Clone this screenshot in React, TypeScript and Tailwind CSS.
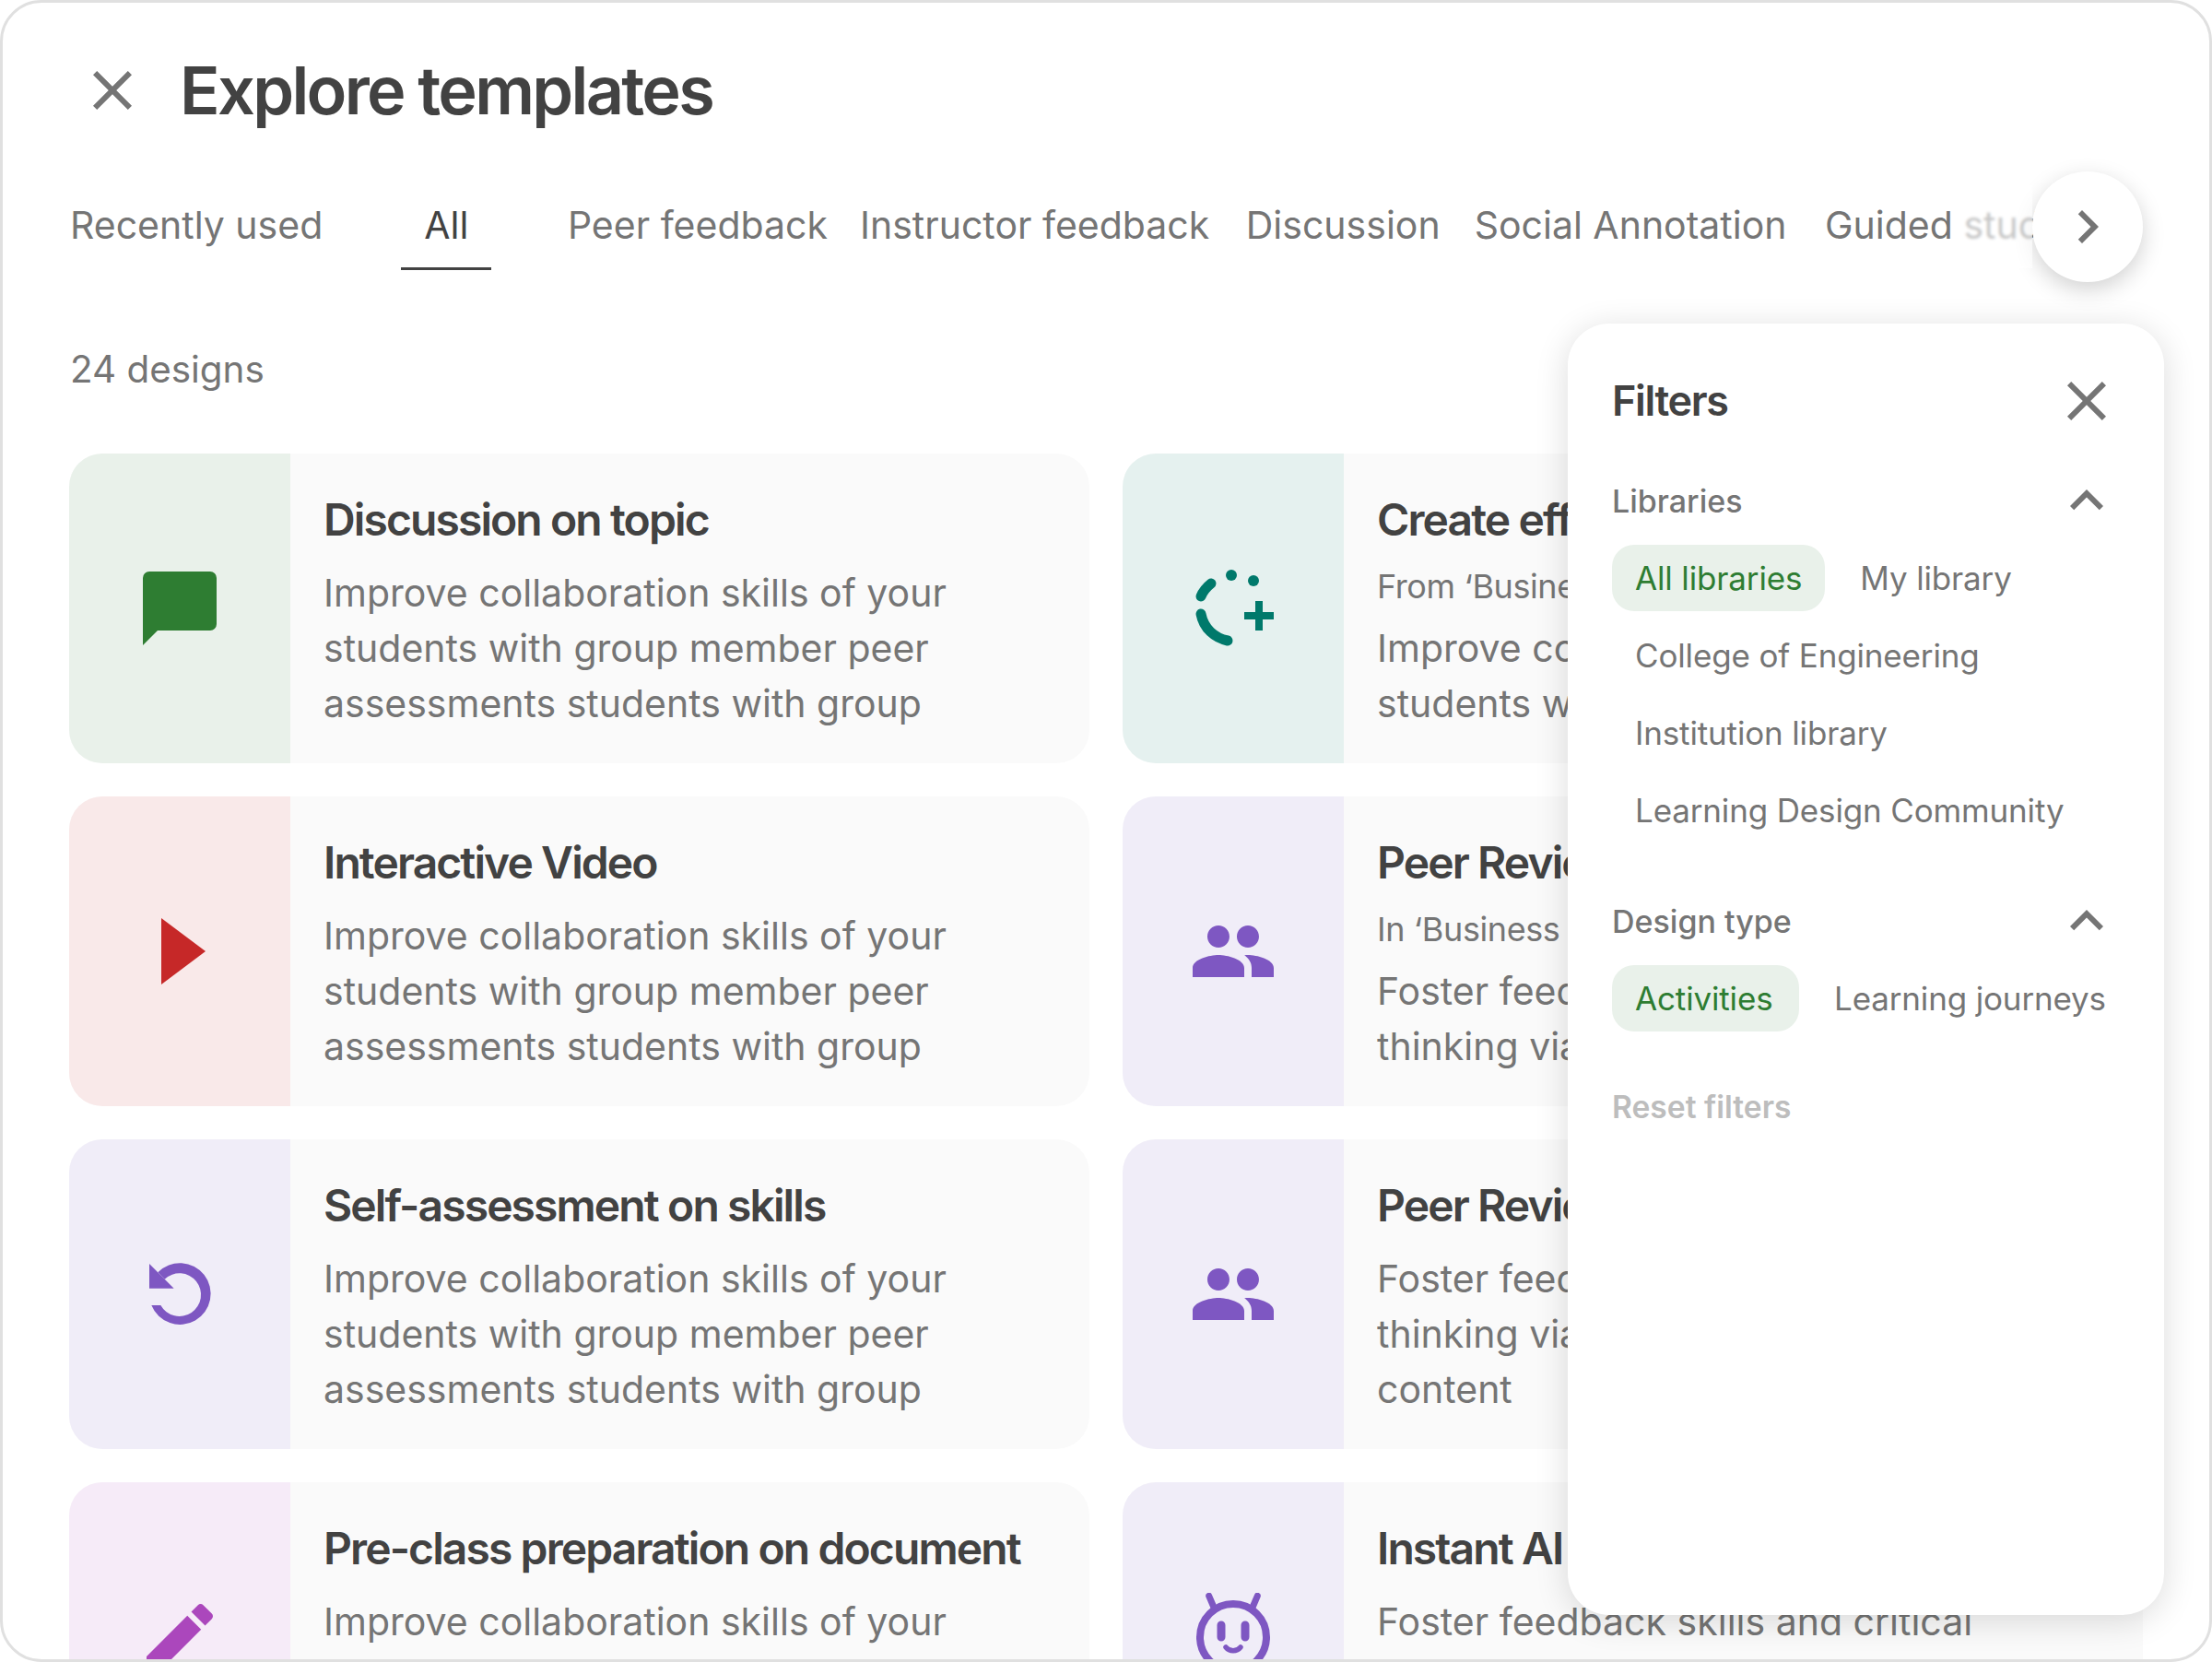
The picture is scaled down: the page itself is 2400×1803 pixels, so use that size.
import type { ReactNode } from 'react';

const font = "font-['Inter','Liberation_Sans',sans-serif]";

function CloseIcon({ className = '' }: { className?: string }) {
  return (
    <svg width="72" height="72" viewBox="0 0 24 24" fill="#757575" className={`shrink-0 ${className}`}>
      <path d="M19 6.41L17.59 5 12 10.59 6.41 5 5 6.41 10.59 12 5 17.59 6.41 19 12 13.41 17.59 19 19 17.59 13.41 12z" />
    </svg>
  );
}

function NextIcon() {
  return (
    <svg width="72" height="72" viewBox="0 0 24 24" fill="#757575">
      <path d="M10 6L8.59 7.41 13.17 12l-4.58 4.59L10 18l6-6z" />
    </svg>
  );
}

function ExpandLessIcon() {
  return (
    <svg width="72" height="72" viewBox="0 0 24 24" fill="#757575">
      <path d="M12 8l-6 6 1.41 1.41L12 10.83l4.59 4.58L18 14z" />
    </svg>
  );
}

function ChatIcon() {
  return (
    <svg width="80" height="80" viewBox="0 0 80 80" fill="#2e7d32">
      <path d="M7 0H73a7 7 0 0 1 7 7V57a7 7 0 0 1-7 7H16L0 80V7a7 7 0 0 1 7-7z" />
    </svg>
  );
}

function PlayIcon() {
  return (
    <svg width="48" height="72" viewBox="0 0 48 72" fill="#c62828" className="ml-[8px]">
      <path d="M0 0L48 36L0 72z" />
    </svg>
  );
}

function AddCircleIcon() {
  return (
    <svg width="96" height="96" viewBox="0 0 96 96" fill="none" stroke="#00796b" strokeLinecap="round">
      <path d="M13 35C15 30 19 25 24 21" strokeWidth="11" />
      <path d="M13 54C16 70 28 80 42 83" strokeWidth="11" />
      <circle cx="46" cy="12" r="6" fill="#00796b" stroke="none" />
      <circle cx="70" cy="18" r="6" fill="#00796b" stroke="none" />
      <path d="M60 56H92M76 40V72" strokeWidth="8" strokeLinecap="butt" />
    </svg>
  );
}

function PeopleIcon() {
  return (
    <svg width="96" height="96" viewBox="0 0 24 24" fill="#7e57c2">
      <path d="M16 11c1.66 0 2.99-1.34 2.99-3S17.66 5 16 5c-1.66 0-3 1.34-3 3s1.34 3 3 3zm-8 0c1.66 0 2.99-1.34 2.99-3S9.66 5 8 5C6.34 5 5 6.34 5 8s1.34 3 3 3zm0 2c-2.33 0-7 1.17-7 3.5V19h14v-2.5c0-2.33-4.67-3.5-7-3.5zm8 0c-.29 0-.62.02-.97.05 1.16.84 1.97 1.97 1.97 3.45V19h6v-2.5c0-2.33-4.67-3.5-7-3.5z" />
    </svg>
  );
}

function ReplayIcon() {
  return (
    <svg width="120" height="120" viewBox="0 -18 360 360" fill="#7e57c2">
      <path d="M81 63V143H161z" />
      <path d="M88 198A100 100 0 1 0 109 91L131 113A70 70 0 1 1 118 198z" />
    </svg>
  );
}

function EditIcon() {
  return (
    <svg width="96" height="96" viewBox="0 0 24 24" fill="#ab47bc">
      <path d="M3 17.25V21h3.75L17.81 9.94l-3.75-3.75L3 17.25zM20.71 7.04c.39-.39.39-1.02 0-1.41l-2.34-2.34c-.39-.39-1.02-.39-1.41 0l-1.83 1.83 3.75 3.75 1.83-1.83z" />
    </svg>
  );
}

function RobotIcon() {
  return (
    <svg width="96" height="96" viewBox="0 0 96 96" fill="none" stroke="#7e57c2" strokeLinecap="round">
      <circle cx="48" cy="48" r="36" strokeWidth="8" />
      <path d="M21.7 3.3L26.7 15M74.3 3.3L69.3 15" strokeWidth="7" />
      <path d="M35 35V48M61 35V48" strokeWidth="9" />
      <path d="M40 59C44 64 52 64 56 59" strokeWidth="5.5" />
    </svg>
  );
}

interface Template {
  title: string;
  sub?: string;
  lines: string[];
  tint: string;
  icon: ReactNode;
}

const longBody = [
  'Improve collaboration skills of your',
  'students with group member peer',
  'assessments students with group',
];

const leftCards: Template[] = [
  { title: 'Discussion on topic', lines: longBody, tint: 'bg-[#e9f1ea]', icon: <ChatIcon /> },
  { title: 'Interactive Video', lines: longBody, tint: 'bg-[#f9e9e9]', icon: <PlayIcon /> },
  { title: 'Self-assessment on skills', lines: longBody, tint: 'bg-[#f0edf8]', icon: <ReplayIcon /> },
  { title: 'Pre-class preparation on document', lines: longBody, tint: 'bg-[#f6ebf8]', icon: <EditIcon /> },
];

const rightCards: Template[] = [
  {
    title: 'Create effective groups',
    sub: 'From ‘Business 101’',
    lines: ['Improve collaboration skills of your', 'students with group member peer'],
    tint: 'bg-[#e5f1ef]',
    icon: <AddCircleIcon />,
  },
  {
    title: 'Peer Review on document',
    sub: 'In ‘Business 101’',
    lines: ['Foster feedback skills and critical', 'thinking via peer assessments'],
    tint: 'bg-[#f0edf8]',
    icon: <PeopleIcon />,
  },
  {
    title: 'Peer Review on video',
    lines: ['Foster feedback skills and critical', 'thinking via peer assessments of', 'content'],
    tint: 'bg-[#f0edf8]',
    icon: <PeopleIcon />,
  },
  {
    title: 'Instant AI feedback',
    lines: ['Foster feedback skills and critical', 'thinking via instant AI feedback'],
    tint: 'bg-[#f0edf8]',
    icon: <RobotIcon />,
  },
];

const tabs = [
  { label: 'Recently used', cls: 'mr-[85px]' },
  { label: 'All', cls: 'px-[25px] mr-[82.5px]' },
  { label: 'Peer feedback', cls: 'mr-[35px]' },
  { label: 'Instructor feedback', cls: 'mr-[39.5px]' },
  { label: 'Discussion', cls: 'mr-[37px]' },
  { label: 'Social Annotation', cls: 'mr-[41.5px]' },
  { label: 'Guided study', cls: '' },
];

function TemplateCard({ item }: { item: Template }) {
  return (
    <div className="flex h-[336px] shrink-0 overflow-hidden rounded-[36px] bg-[#fafafa]">
      <div className={`flex w-[240px] shrink-0 items-center justify-center ${item.tint}`}>{item.icon}</div>
      <div className="min-w-0 flex-1 pl-[36px] pt-[41px]">
        <h3 className="whitespace-nowrap text-[48px] leading-[62px] font-semibold tracking-[-1.9px] text-[#424242]">
          {item.title}
        </h3>
        {item.sub ? (
          <p className="mt-[18px] mb-[14px] whitespace-nowrap text-[36px] leading-[46px] tracking-[-0.4px] text-[#757575]">
            {item.sub}
          </p>
        ) : (
          <div className="h-[18px]" />
        )}
        {item.lines.map((line) => (
          <p key={line} className="whitespace-nowrap text-[41px] leading-[60px] text-[#757575]">
            {line}
          </p>
        ))}
      </div>
    </div>
  );
}

function Chip({ label, active, cls = '' }: { label: string; active?: boolean; cls?: string }) {
  return (
    <span
      className={`flex h-[72px] shrink-0 items-center rounded-[24px] px-[25px] text-[35px] tracking-[-0.15px] whitespace-nowrap ${
        active ? 'bg-[#e9f1ea] text-[#2e7d32]' : 'text-[#757575]'
      } ${cls}`}
    >
      {label}
    </span>
  );
}

function FilterHead({ label }: { label: string }) {
  return (
    <div className="flex h-[48px] items-center justify-between">
      <span className="text-[34px] font-medium text-[#757575]">{label}</span>
      <ExpandLessIcon />
    </div>
  );
}

export default function App() {
  return (
    <div className={`${font} relative h-[1803px] w-[2400px] overflow-hidden rounded-[45px] border-[3px] border-[#e0e0e0] bg-white`}>
      {/* Header */}
      <div className="flex h-[190px] items-center pl-[83px]">
        <CloseIcon />
        <h1 className="ml-[37px] text-[72px] font-semibold tracking-[-2.7px] text-[#424242]">Explore templates</h1>
      </div>

      {/* Tabs */}
      <div className="mt-[8px] flex h-[92px] items-start pl-[73px] text-[41px] leading-[87px] whitespace-nowrap text-[#757575]">
        {tabs.map((t) => (
          <span
            key={t.label}
            className={`h-[92px] shrink-0 ${t.cls} ${t.label === 'All' ? 'border-b-[3px] border-[#424242] text-[#424242]' : ''}`}
          >
            {t.label}
          </span>
        ))}
      </div>

      <p className="mt-[83px] pl-[73px] text-[40.4px] leading-[50px] text-[#757575]">24 designs</p>

      {/* Grid */}
      <div className="mt-[66px] grid grid-cols-2 gap-x-[36px] px-[72px]">
        <div className="flex flex-col gap-[36px]">
          {leftCards.map((c) => (
            <TemplateCard key={c.title} item={c} />
          ))}
        </div>
        <div className="flex flex-col gap-[36px]">
          {rightCards.map((c) => (
            <TemplateCard key={c.title} item={c} />
          ))}
        </div>
      </div>

      {/* Scroll button with fade */}
      <div className="absolute top-[183px] right-[72px] flex h-[120px] items-center">
        <div className="h-[90px] w-[86px] bg-white/60 backdrop-blur-[1.5px]" />
        <button className="flex h-[120px] w-[120px] items-center justify-center rounded-full bg-white shadow-[0_8px_24px_rgba(0,0,0,0.18)]">
          <NextIcon />
        </button>
      </div>

      {/* Filters panel */}
      <div className="absolute top-[348px] left-[1698px] h-[1401px] w-[647px] rounded-[45px] bg-white px-[48px] pt-[48px] shadow-[0_6px_36px_rgba(0,0,0,0.14)]">
        <div className="flex h-[72px] items-center justify-between">
          <span className="text-[45px] font-semibold tracking-[-1.4px] text-[#424242]">Filters</span>
          <CloseIcon />
        </div>

        <div className="mt-[48px]">
          <FilterHead label="Libraries" />
        </div>
        <div className="mt-[24px] flex flex-col gap-[12px]">
          <div className="flex gap-[13px]">
            <Chip label="All libraries" active />
            <Chip label="My library" />
          </div>
          <Chip label="College of Engineering" cls="self-start" />
          <Chip label="Institution library" cls="self-start" />
          <Chip label="Learning Design Community" cls="self-start" />
        </div>

        <div className="mt-[60px]">
          <FilterHead label="Design type" />
        </div>
        <div className="mt-[24px] flex gap-[13px]">
          <Chip label="Activities" active cls="w-[203px]" />
          <Chip label="Learning journeys" />
        </div>

        <p className="mt-[57px] text-[33.6px] font-semibold text-[#bdbdbd]">Reset filters</p>
      </div>
    </div>
  );
}
